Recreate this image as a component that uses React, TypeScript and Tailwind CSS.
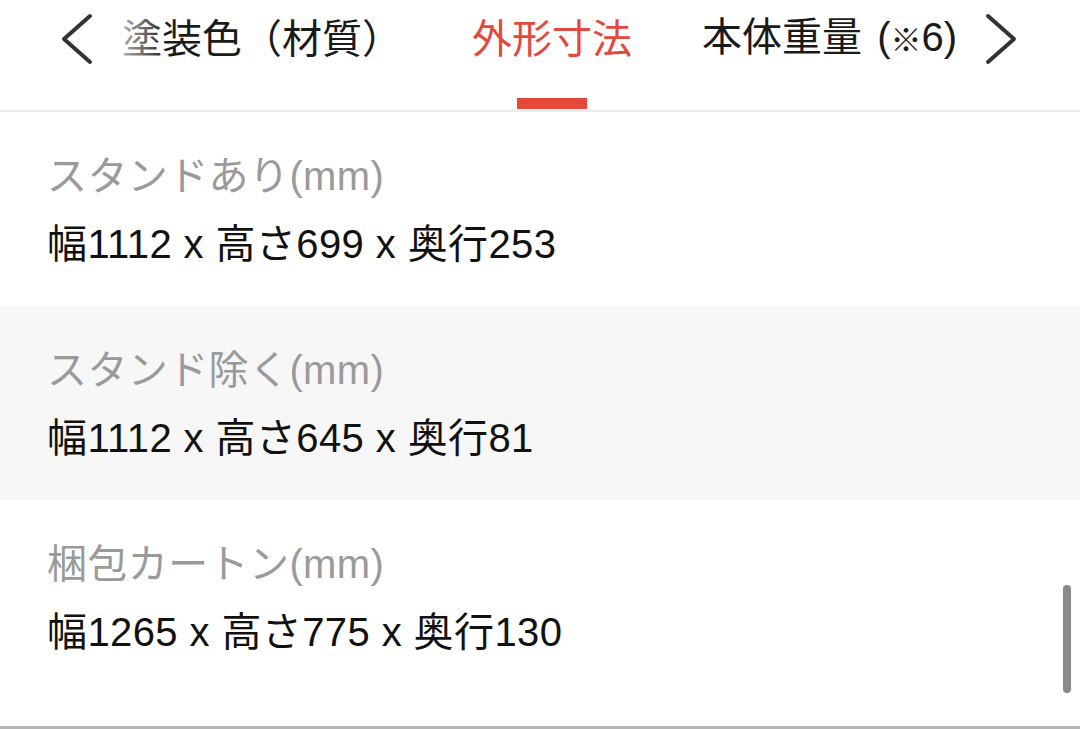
const rows = [
  { label: "スタンドあり(mm)", value: "幅1112 x 高さ699 x 奥行253", shaded: false },
  { label: "スタンド除く(mm)", value: "幅1112 x 高さ645 x 奥行81", shaded: true },
  { label: "梱包カートン(mm)", value: "幅1265 x 高さ775 x 奥行130", shaded: false },
];

const Chevron = ({ dir }: { dir: "left" | "right" }) => (
  <svg width="40" height="52" viewBox="0 0 40 52" fill="none">
    <path
      d={dir === "left" ? "M32 3 L6 26 L32 49" : "M8 3 L34 26 L8 49"}
      stroke="#333"
      strokeWidth="4"
      strokeLinecap="round"
      strokeLinejoin="round"
    />
  </svg>
);

const Tab = ({ children, active }: { children: React.ReactNode; active?: boolean }) => (
  <div className="relative h-[48px] flex items-center shrink-0">
    <span className={active ? "text-[#e2493d]" : "text-[#1a1a1a]"}>{children}</span>
    {active && (
      <div className="absolute top-[83px] left-1/2 -translate-x-1/2 w-[70px] h-[11px] bg-[#e5473a]" />
    )}
  </div>
);

export default function App() {
  return (
    <div
      className="relative w-[1080px] h-[729px] flex flex-col bg-white overflow-hidden text-[40px] leading-[48px]"
      style={{ fontFamily: '"Liberation Sans", "Noto Sans CJK JP", sans-serif' }}
    >
      <header className="h-[112px] shrink-0 flex items-start pt-[15px] pl-[58px] border-b-2 border-[#ebebeb]">
        <div className="h-[48px] flex items-center">
          <Chevron dir="left" />
        </div>
        <div className="relative w-[882px] h-[97px] flex items-start gap-[70px] pl-[24px] overflow-hidden">
          <Tab>塗装色（材質）</Tab>
          <Tab active>外形寸法</Tab>
          <Tab>
            本体重量 <span className="ml-[4px]">(</span>
            <span className="text-[31px]">※</span>6)
          </Tab>
          <div className="absolute left-0 top-0 h-[48px] w-[70px] bg-linear-to-r from-white to-transparent" />
        </div>
        <div className="h-[48px] flex items-center">
          <Chevron dir="right" />
        </div>
      </header>

      {rows.map((r, i) => (
        <div
          key={r.label}
          className={`flex flex-col gap-[20px] px-[47px] pt-[40px] pb-[38px] tracking-[0.4px] ${
            r.shaded ? "bg-[#f7f7f7]" : "bg-white"
          } ${i === rows.length - 1 ? "flex-1" : ""}`}
        >
          <div className="text-[#9a9a9a]">{r.label}</div>
          <div className="text-[#111]">{r.value}</div>
        </div>
      ))}

      <div className="h-[3px] shrink-0 bg-[#b4b4b4]" />

      <div className="absolute left-[1063px] top-[585px] w-[8px] h-[108px] rounded-full bg-[#8a8a8a]" />
    </div>
  );
}
